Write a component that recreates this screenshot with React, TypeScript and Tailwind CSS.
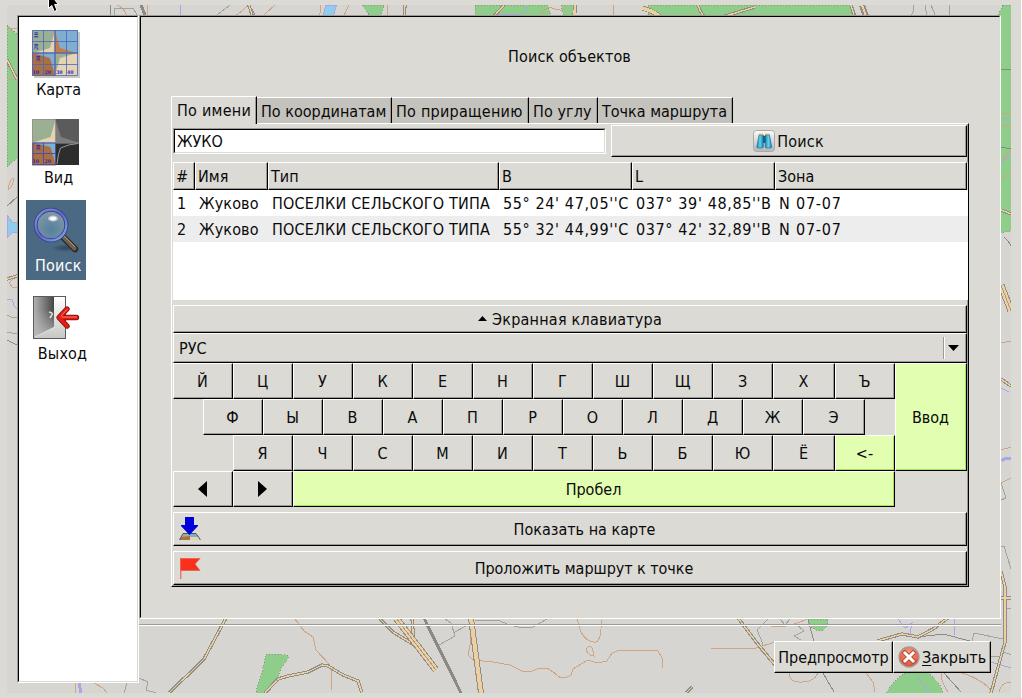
import React from "react";

const bevel =
  "border border-t-white border-l-white border-r-black border-b-black shadow-[inset_-1px_-1px_0_#9c9a92]";
const face = "bg-[#dbdad5]";

function Road({ d, w = 3.4, inner = 1.3 }: { d: string; w?: number; inner?: number }) {
  return (
    <g fill="none">
      <path d={d} stroke="#918e86" strokeWidth={w} />
      <path d={d} stroke="#edcfa2" strokeWidth={inner} />
    </g>
  );
}

function MapBackdrop() {
  return (
    <svg
      className="absolute left-[7px] top-[5px]"
      width="1004"
      height="688"
      viewBox="7 5 1004 688"
      shapeRendering="crispEdges"
    >
      <rect x="7" y="5" width="1004" height="688" fill="#d7d5d1" />
      <g fill="#8ecd8a" stroke="#869b80" strokeWidth="1" strokeDasharray="1 2">
        <path d="M7 25L17 34V159L12 162L7 167Z" />
        <path d="M362 5H384L379 22H374Z" />
        <path d="M475 5H547L553 22H475Z" />
        <path d="M561 5H575V22H565Z" />
        <path d="M648 5H853L857 22H648Z" />
        <path d="M1003 5H1012V231L1000 233V24H993Z" />
        <path d="M266 654L277 654L286 655L289 657L282 667L277 678L266 693H256L257 687L262 672Z" />
        <path d="M808 619H828Q828 631 819 631Q811 629 808 623Z" />
        <path d="M886 693Q895 678 907 672H927Q940 681 943 693Z" />
      </g>
      <g fill="#8ecdec" stroke="#aaa6e6">
        <path d="M326 5H337Q333 12 334 22H321Z" />
        <path d="M7 215L12 222H18V232L12 233L7 238Z" />
      </g>
      <g fill="none" stroke="#cfa584" strokeWidth="1">
        <path d="M295 619L304 631L313 637L316 650L329 664L331 670V690" />
        <path d="M469 619L471 640L468 655L473 660L493 662L510 665L522 671L532 671L540 668L547 668L553 672L561 678L567 677L571 675L573 669L588 660L597 663L607 661L612 653L620 650H650L658 651L662 658L662 668" />
        <path d="M577 619L581 632Q587 643 596 642Q602 639 601 619" />
        <path d="M588 647Q584 650 590 655L594 656Q593 645 588 647Z" />
        <path d="M711 648H756L775 642" />
        <path d="M766 625Q785 630 807 619" />
        <path d="M790 673Q788 683 802 682Q814 682 818 673" />
        <path d="M866 673L873 682L875 692" />
        <path d="M941 673Q941 682 948 692" />
        <path d="M962 673Q984 680 992 692" />
        <path d="M999 692Q1001 682 1011 682" />
        <path d="M75 682V693M94 683L103 688L107 693" />
        <path d="M7 28H17M7 79H17M8 190Q10 178 14 178Q12 188 8 190M17 275L9 283L12 287H17" />
        <path d="M117 5Q124 8 127 16M147 5V15M248 5Q241 13 234 16" />
        <path d="M275 5L256 22M321 5L319 22M349 5L341 22M388 5L387 22M539 22Q540 10 550 7Q565 14 568 5M613 5V22" />
        <path d="M1001 113H1011M1001 125L1011 127M1001 161L1011 150M1001 179L1011 173M1001 343L1011 341M1001 450L1011 447M1001 483L1011 478" />
      </g>
      <g fill="none" stroke="#a5a39e" strokeWidth="1">
        <path d="M445 619L451 623L455 636L439 645M453 633L466 626" />
        <path d="M475 620H497L510 625L518 627H533L547 619" />
        <path d="M139 678L148 682L146 690L156 693M127 683L124 693" />
        <path d="M114 15V8H133L137 15M230 5L217 15M913 5L914 11L906 22M949 5V17H941L934 22M925 5Q926 15 930 22M931 5L938 22" />
        <path d="M768 619L757 630L763 644L760 650L772 660M780 619L785 625L790 619M796 624L804 631L794 636L801 640" />
        <path d="M972 641L974 633L1003 639M1005 608H1011M1001 656H991M1004 652L1011 655" />
        <path d="M1004 546L1011 569M1001 546H1004M1001 483L1006 498L1001 500" />
        <path d="M7 315L11 317H17M7 332L17 334" />
      </g>
      <g fill="none" stroke="#8b8984">
        <path d="M424 618L461 693" strokeWidth="3" />
        <path d="M141 5L145 15" strokeWidth="3" />
        <path d="M110 5L111 15M808 619L810 627L814 641M823 673L834 692" />
        <path d="M918 637L943 634L970 641M944 673L961 692M1001 147L1011 149M1004 237Q1009 241 1011 246M7 206L17 197M7 340L17 345M1001 69L1011 70" />
      </g>
      <g fill="none" stroke="#aaa6e6">
        <path d="M180 5V15M497 15L520 14L526 11V5M954 619V635M898 619L905 628L912 623L910 634M918 677L929 692M991 662L1011 668" />
        <path d="M1001 118H1011M1001 162L1011 155M1001 388L1009 392M7 300Q13 297 14 306L17 309" />
        <path d="M1001 461Q1004 458 1011 458" strokeWidth="3" />
        <path d="M79 683L81 693" strokeWidth="3" />
      </g>
      <Road d="M7 60L17 79" />
      <Road d="M7 279L17 276" />
      <Road d="M248 5L254 15" />
      <Road d="M249 5L254 22M405 5L404 22" />
      <Road d="M504 5L489 22" />
      <Road d="M575 5L574 22" w={4} inner={2.4} />
      <Road d="M642 8Q660 13 664 22" w={5} inner={3.6} />
      <Road d="M698 5Q702 17 709 21L755 7" />
      <Road d="M851 5L856 22" w={3.4} />
      <Road d="M862 5L868 22" w={6} inner={2} />
      <Road d="M1001 210L1011 214" />
      <Road d="M1001 285L1011 311" w={7} inner={5} />
      <path d="M1001 285L1011 311" stroke="#a79b87" fill="none" />
      <Road d="M1001 379L1011 386" />
      <Road d="M226 618L204 659L190 673L180 682L169 693" />
      <Road d="M265 693L278 679L288 676L308 672L322 665L328 666L343 675L358 681L362 693" />
      <Road d="M380 619L393 632L416 646L421 652" />
      <Road d="M412 618L414 643" />
      <Road d="M396 618L436 670" w={7} inner={5} />
      <path d="M396 618L436 670" stroke="#a79b87" fill="none" />
      <Road d="M471 618L481 693" w={6} inner={4} />
      <Road d="M686 693L692 687" />
      <Road d="M738 618L757 643L775 665" />
      <Road d="M877 641L902 634L918 637L933 629L948 618" />
      <Road d="M1001 571L1005 587V642L991 693M1001 598H1011" />
    </svg>
  );
}

function Cursor() {
  return (
    <svg className="absolute left-[47px] top-0" width="14" height="13" viewBox="0 0 14 13">
      <path d="M1.5 -8V8.5L4.8 5.5L7.2 11.5L10 10.3L7.6 4.6H11.5Z" fill="#000" stroke="#fff" strokeWidth="1" />
    </svg>
  );
}

function GridLabels({ view }: { view?: boolean }) {
  return (
    <g
      fill="#2a2ab0"
      fontFamily="DejaVu Serif, serif"
      fontSize="5.2"
      fontWeight="bold"
    >
      <text x="0.5" y="43.8">10</text>
      <text x="12.5" y="43.8">20</text>
      {!view && <text x="24" y="43.8">30</text>}
      {!view && <text x="35" y="43.8">40</text>}
      {!view && <text transform="translate(6 8.5) rotate(-90)" x="0" y="0">10</text>}
      {!view && <text transform="translate(6 20) rotate(-90)" x="0" y="0">20</text>}
      <text transform="translate(7.5 32) rotate(-90)" x="0" y="0">30</text>
    </g>
  );
}

function MapIcon() {
  return (
    <svg width="48" height="48" viewBox="0 0 48 48">
      <rect x="2" y="2" width="46" height="46" fill="#c8c8c8" />
      <rect width="23" height="23" fill="#9bb092" />
      <rect x="23" width="23" height="23" fill="#7fafd0" />
      <rect y="23" width="23" height="23" fill="#aa7043" />
      <rect x="23" y="23" width="23" height="23" fill="#e6d3b3" />
      <path d="M23 1L18 18L1 23H23Z" fill="#e6d3b3" />
      <path d="M23 1L28 18L45 23H23Z" fill="#c87b45" />
      <path d="M23 45L18 28L1 23H23Z" fill="#7fafd0" />
      <path d="M23 45L28 28L45 23H23Z" fill="#9bb092" />
      <path d="M.5 .5H45.5V45.5H.5ZM11.5 0V46M34.5 0V46M0 11.5H46M0 34.5H46" fill="none" stroke="#4867bd" strokeOpacity=".8" />
      <path d="M23 0V46M0 23H46" stroke="#5967ad" strokeWidth="1.5" />
      <GridLabels />
    </svg>
  );
}

function ViewIcon() {
  return (
    <svg width="47" height="47" viewBox="0 0 47 47">
      <rect width="24" height="24" fill="#9bb092" />
      <rect x="23.5" width="23.5" height="24" fill="#5b5b5b" />
      <rect y="23.5" width="24" height="23" fill="#aa7043" />
      <rect x="24" y="24" width="23" height="22" fill="#2d2d2d" />
      <path d="M23.5 1L18.5 18L1 23.5H23.5Z" fill="#e6d3b3" />
      <path d="M23.5 1L29 18L46 23.5H23.5Z" fill="#7d7d7d" />
      <path d="M23.5 45L18.5 28L1 23.5H23.5Z" fill="#7fafd0" />
      <path d="M25 45Q26 35 28.5 29Q37 25 46 24.5" fill="none" stroke="#999" />
      <path d="M1 24V45.5H23M11.5 24V46M1 34.5H23M1 24H23.5V46" fill="none" stroke="#4a4fa8" />
      <path d="M.5 .5V24M0 .5H23M24 24H47" fill="none" stroke="#939393" />
      <GridLabels view />
    </svg>
  );
}

function MagnifierIcon() {
  return (
    <svg width="48" height="48" viewBox="0 0 48 48">
      <defs>
        <radialGradient id="lens" cx=".5" cy=".65" r=".6">
          <stop offset="0" stopColor="#54809c" />
          <stop offset="1" stopColor="#8497a8" />
        </radialGradient>
        <radialGradient id="shade">
          <stop offset="0" stopColor="#1e3349" stopOpacity=".65" />
          <stop offset="1" stopColor="#1e3349" stopOpacity="0" />
        </radialGradient>
        <linearGradient id="rim" x1="0" y1="0" x2="1" y2="1">
          <stop offset="0" stopColor="#8a91dc" />
          <stop offset=".5" stopColor="#6a60cc" />
          <stop offset="1" stopColor="#86aee9" />
        </linearGradient>
      </defs>
      <ellipse cx="33" cy="42" rx="14" ry="4" fill="url(#shade)" />
      <path d="M31 31L43 43" stroke="#2c2723" strokeWidth="6.6" strokeLinecap="round" />
      <path d="M31.5 31L42.5 42.5" stroke="#6f5f4f" strokeWidth="4.2" strokeLinecap="round" />
      <path d="M32 30L43 41" stroke="#a59785" strokeWidth="1" />
      <circle cx="19" cy="19" r="15.3" fill="url(#lens)" stroke="#234784" strokeWidth="4" />
      <circle cx="19" cy="19" r="15.3" fill="none" stroke="url(#rim)" strokeWidth="2.3" />
      <ellipse cx="21" cy="12.5" rx="5" ry="3" fill="#fff" fillOpacity=".55" />
      <ellipse cx="21" cy="12.5" rx="3" ry="1.8" fill="#fff" />
    </svg>
  );
}

function ExitIcon() {
  return (
    <svg width="48" height="44" viewBox="0 0 48 44">
      <defs>
        <linearGradient id="door" x1="0" x2="1">
          <stop offset="0" stopColor="#b0b0b0" />
          <stop offset=".5" stopColor="#7d7d7d" />
          <stop offset="1" stopColor="#454545" />
        </linearGradient>
        <linearGradient id="sheen" x1="0" y1="0" x2="0" y2="1">
          <stop offset=".3" stopColor="#bbb" stopOpacity="0" />
          <stop offset="1" stopColor="#bbb" stopOpacity=".9" />
        </linearGradient>
        <linearGradient id="frame" x1="0" y1="0" x2="0" y2="1">
          <stop offset="0" stopColor="#fff" />
          <stop offset="1" stopColor="#c5c8c2" />
        </linearGradient>
      </defs>
      <rect x=".5" y=".5" width="32" height="42" fill="url(#frame)" stroke="#5b5b5b" />
      <path d="M1 1H21V31L3 41L1 42Z" fill="url(#door)" />
      <path d="M1 1H21V31L3 41L1 42Z" fill="url(#sheen)" />
      <path d="M2 41L22 31" stroke="#e4e4e4" />
      <path d="M16 16Q21 17 18.5 19.5L17 22" fill="none" stroke="#ddd" strokeWidth="1.6" />
      <path d="M43.500 21.5H27M34 13L26 21.5L34 30" fill="none" stroke="#8b1212" strokeWidth="5.4" strokeLinecap="round" strokeLinejoin="round" />
      <path d="M43.500 21.5H27M34 13L26 21.5L34 30" fill="none" stroke="#e51c16" strokeWidth="3.6" strokeLinecap="round" strokeLinejoin="round" />
      <path d="M43.500 21H29M34 13.5L28 20" fill="none" stroke="#ff7a62" strokeWidth="1" strokeLinecap="round" />
    </svg>
  );
}

function BinocularsIcon() {
  return (
    <svg className="mb-[2px]" width="22" height="22" viewBox="0 0 22 22">
      <defs>
        <linearGradient id="tile" x1="0" y1="0" x2="0" y2="1">
          <stop offset="0" stopColor="#fbfbfb" />
          <stop offset="1" stopColor="#b5b5b5" />
        </linearGradient>
        <linearGradient id="tube" x1="0" x2="1">
          <stop offset="0" stopColor="#1688b5" />
          <stop offset=".5" stopColor="#62d0f2" />
          <stop offset="1" stopColor="#1585ae" />
        </linearGradient>
      </defs>
      <rect x=".5" y=".5" width="21" height="21" rx="3" fill="url(#tile)" stroke="#a9a9a9" />
      <rect x="9.500" y="6" width="3.500" height="7" fill="#1a627e" />
      <path d="M6 5H10.300V17L9.500 18H4.500L3.800 17Z" fill="url(#tube)" stroke="#17617d" strokeWidth=".6" />
      <path d="M12.200 5H16.500L18.700 17L18 18H13L12.200 17Z" fill="url(#tube)" stroke="#17617d" strokeWidth=".6" />
      <path d="M6 4.500H10M12.500 4.500H16.500" stroke="#c9ad5a" strokeWidth="1.600" />
    </svg>
  );
}

function ShowIcon() {
  return (
    <svg width="22" height="24" viewBox="0 0 22 24">
      <path d="M4 17H17L21.500 23H.5Z" fill="#9bb092" />
      <path d="M11 17H17L19.500 20H11Z" fill="#7fafd0" />
      <path d="M2.500 20L11 19V23H.5Z" fill="#aa7043" />
      <path d="M11 23V20H19.500L21.500 23Z" fill="#e6d3b3" />
      <path d="M4 16.500H17L21.500 23M4 16.500L.5 23" fill="none" stroke="#4f5652" />
      <path d="M6 0H15V8H19V9L10.500 18L2 9V8H6Z" fill="#0000dc" />
    </svg>
  );
}

function FlagIcon() {
  return (
    <svg width="21" height="21" viewBox="0 0 21 21">
      <rect width="1.500" height="21" fill="#f07a6d" />
      <path d="M.5 .5H20L15 6L20 12.500H.5Z" fill="#f8301c" stroke="#e9624f" strokeWidth=".8" />
    </svg>
  );
}

function CloseIcon() {
  return (
    <svg className="mb-[2px]" width="22" height="22" viewBox="0 0 22 22">
      <defs>
        <radialGradient id="red" cx=".5" cy=".3" r=".7">
          <stop offset="0" stopColor="#f59a82" />
          <stop offset="1" stopColor="#dc4d37" />
        </radialGradient>
      </defs>
      <circle cx="11" cy="11" r="10" fill="url(#red)" stroke="#a49a97" strokeWidth="1.300" />
      <path d="M7 7L15 15M15 7L7 15" stroke="#b5442f" strokeWidth="4.600" strokeLinecap="square" />
      <path d="M7 7L15 15M15 7L7 15" stroke="#fff" strokeWidth="3" strokeLinecap="square" />
    </svg>
  );
}

function Key({ children, className = "w-[60px]", green }: { children: React.ReactNode; className?: string; green?: boolean }) {
  return (
    <button
      className={`flex shrink-0 items-center justify-center border border-t-white border-l-white border-r-black border-b-black pt-[2px] pr-px ${
        green
          ? "bg-[#e2ffb1] shadow-[inset_-1px_-1px_0_#a4e05a]"
          : "bg-[#dbdad5] shadow-[inset_-1px_-1px_0_#9c9a92]"
      } ${className}`}
    >
      {children}
    </button>
  );
}

const columns = [
  { name: "#", w: "w-[22px]", tracking: "" },
  { name: "Имя", w: "w-[73px]", tracking: "tracking-[0.15px]" },
  { name: "Тип", w: "w-[231px]", tracking: "tracking-[0.18px]" },
  { name: "B", w: "w-[133px]", tracking: "tracking-[0.62px]" },
  { name: "L", w: "w-[143px]", tracking: "tracking-[0.62px]" },
  { name: "Зона", w: "w-[192px]", tracking: "tracking-[0.8px]" },
];

const results = [
  ["1", "Жуково", "ПОСЕЛКИ СЕЛЬСКОГО ТИПА", "55° 24' 47,05''С", "037° 39' 48,85''В", "N 07-07"],
  ["2", "Жуково", "ПОСЕЛКИ СЕЛЬСКОГО ТИПА", "55° 32' 44,99''С", "037° 42' 32,89''В", "N 07-07"],
];

const tabs = [
  { name: "По координатам", w: "w-[135px]", tracking: "" },
  { name: "По приращению", w: "w-[137px]", tracking: "tracking-[0.24px]" },
  { name: "По углу", w: "w-[69px]", tracking: "tracking-[0.1px]" },
  { name: "Точка маршрута", w: "w-[135px]", tracking: "" },
];

function Sidebar() {
  return (
    <nav className="flex h-[668px] w-[122px] shrink-0 border border-t-[#9c9a92] border-l-[#9c9a92] border-r-white border-b-white">
      <div className="flex w-full flex-col border border-t-black border-l-black border-r-[#dbdad5] border-b-[#dbdad5] bg-white">
        <div className="flex h-[89px] w-[78px] flex-col items-center pt-[13px] pl-[1px]">
          <div className="pr-[5px]"><MapIcon /></div>
          <span className="mt-[2px] tracking-[-0.15px]">Карта</span>
        </div>
        <div className="flex h-[94px] w-[79px] flex-col items-center pt-[13px]">
          <div className="pr-[6px]"><ViewIcon /></div>
          <span className="mt-[2px]">Вид</span>
        </div>
        <div className="ml-[7px] flex h-[80px] w-[60px] flex-col bg-[#4b6983] pt-[6px] pl-[5px] text-white">
          <div className="pl-px"><MagnifierIcon /></div>
          <span className="mt-[2px] ml-[4px] tracking-[0.2px]">Поиск</span>
        </div>
        <div className="flex w-[87px] flex-col items-center pt-[16px]">
          <div className="pr-[11px]"><ExitIcon /></div>
          <span className="mt-[4px] tracking-[0.2px]">Выход</span>
        </div>
      </div>
    </nav>
  );
}

function Keyboard() {
  return (
    <div className="flex h-[144px]">
      <div className="flex w-[722px] flex-col">
        <div className="flex h-[36px]">
          {"ЙЦУКЕНГШЩЗ".split("").map((k) => <Key key={k}>{k}</Key>)}
          <Key className="w-[62px]">Х</Key>
          <Key>Ъ</Key>
        </div>
        <div className="flex h-[36px] pl-[30px]">
          {"ФЫВАПРОЛДЖ".split("").map((k) => <Key key={k}>{k}</Key>)}
          <Key className="w-[62px]">Э</Key>
        </div>
        <div className="flex h-[36px] pl-[60px]">
          {"ЯЧСМИТЬБЮ".split("").map((k) => <Key key={k}>{k}</Key>)}
          <Key className="w-[62px]">Ё</Key>
          <Key green>&lt;-</Key>
        </div>
        <div className="flex h-[36px]">
          <Key>
            <svg className="mr-px mb-[3px]" width="9" height="16" viewBox="0 0 9 16"><path d="M9 0V16L0 8Z" /></svg>
          </Key>
          <Key>
            <svg className="mr-px mb-[3px]" width="9" height="16" viewBox="0 0 9 16"><path d="M0 0V16L9 8Z" /></svg>
          </Key>
          <Key green className="w-[602px]">Пробел</Key>
        </div>
      </div>
      <Key green className="h-[108px] w-[72px]">Ввод</Key>
    </div>
  );
}

function SearchPanel() {
  return (
    <section className={`flex h-[604px] w-[862px] border border-t-[#9c9a92] border-l-[#9c9a92] border-r-white border-b-white ${face}`}>
      <div className="flex w-full flex-col border border-t-black border-l-black border-r-[#dbdad5] border-b-[#dbdad5] pl-[30px]">
        <h1 className="flex h-[79px] w-[797px] items-center justify-center tracking-[0.12px]">Поиск объектов</h1>
        <div className="relative z-10 flex h-[28px] items-end">
          <div className="flex h-[28px] w-[86px] items-center border border-t-white border-l-white border-r-black border-b-0 bg-[#dbdad5] pt-[1px] pl-[5px] tracking-[0.25px] whitespace-nowrap shadow-[inset_-1px_0_0_#9c9a92]">
            По имени
          </div>
          {tabs.map((t) => (
            <div
              key={t.name}
              className={`mb-px flex h-[26px] items-center border border-t-white border-l-0 border-r-black border-b-0 bg-[#c4c2bc] pl-[4px] pt-[3px] whitespace-nowrap shadow-[inset_-1px_0_0_#9c9a92] ${t.w} ${t.tracking}`}
            >
              {t.name}
            </div>
          ))}
        </div>
        <div className="-mt-px flex h-[464px] w-[798px] flex-col border border-t-white border-l-white border-r-black border-b-black pl-[1px] shadow-[inset_-1px_-1px_0_#9c9a92]">
          <div className="flex h-[38px] w-[794px] justify-between pt-px">
            <div className="mt-[3px] flex h-[26px] w-[433px] border border-t-[#9c9a92] border-l-[#9c9a92] border-r-white border-b-white">
              <div className="flex w-full items-center border border-t-black border-l-black border-r-[#dbdad5] border-b-[#dbdad5] bg-white pt-[2px] pl-[2px]">
                ЖУКО
              </div>
            </div>
            <button className={`flex h-[32px] w-[356px] items-center justify-center gap-[2px] pt-[2px] pr-px ${face} ${bevel}`}>
              <BinocularsIcon />
              <span className="tracking-[0.2px]">Поиск</span>
            </button>
          </div>
          <div className="h-[138px] w-[795px] bg-white">
            <div className="flex h-[28px] bg-[#dbdad5]">
              {columns.map((c) => (
                <div key={c.name} className={`flex items-center pt-[2px] pl-[2px] ${face} ${bevel} ${c.w}`}>
                  {c.name}
                </div>
              ))}
            </div>
            {results.map((r, ri) => (
              <div key={r[0]} className={`flex h-[26px] items-center pt-[2px] whitespace-nowrap ${ri ? "bg-[#ededed]" : "bg-white"}`}>
                {r.map((v, i) => (
                  <div key={i} className={`shrink-0 pl-[4px] ${columns[i].w} ${columns[i].tracking}`}>{v}</div>
                ))}
              </div>
            ))}
          </div>
          <div className="flex w-[794px] flex-col pt-[5px]">
            <button className={`flex h-[28px] items-center justify-center gap-[5px] pt-[2px] ${face} ${bevel}`}>
              <svg className="mb-[4px]" width="9" height="5" viewBox="0 0 9 5"><path d="M4.500 0L9 5H0Z" /></svg>
              <span className="tracking-[0.22px]">Экранная клавиатура</span>
            </button>
            <div className={`flex h-[30px] items-center justify-between pl-[5px] pr-[7px] ${face} ${bevel}`}>
              <span className="pt-[2px]">РУС</span>
              <div className="flex h-[22px] items-center border-l border-[#9c9a92] pl-[4px] shadow-[inset_1px_0_0_#fff]">
                <svg width="11" height="6" viewBox="0 0 11 6"><path d="M0 0H11L5.500 6Z" /></svg>
              </div>
            </div>
            <Keyboard />
            <button className={`mt-[5px] flex h-[34px] items-center pl-[5px] ${face} ${bevel}`}>
              <ShowIcon />
              <span className="flex-1 pt-[2px] pl-[2px] text-center">Показать на карте</span>
            </button>
            <button className={`mt-[5px] flex h-[34px] items-center pl-[6px] ${face} ${bevel}`}>
              <FlagIcon />
              <span className="flex-1 pt-[2px] pl-px text-center tracking-[-0.04px]">Проложить маршрут к точке</span>
            </button>
          </div>
        </div>
      </div>
    </section>
  );
}

export default function App() {
  return (
    <div className="relative h-[698px] w-[1022px] overflow-hidden border-r border-white bg-[#dbdad5] font-['DejaVu_Sans_Condensed','DejaVu_Sans',sans-serif] text-[16px] leading-[20px] text-[#0a0a0a] [font-stretch:condensed]">
      <MapBackdrop />
      <div className="relative flex pt-[15px] pl-[17px]">
        <Sidebar />
        <main className="flex w-[862px] flex-col">
          <SearchPanel />
          <div className="mt-[5px] h-[2px] border-t border-b border-t-[#9c9a92] border-b-white" />
          <div className="mt-[15px] flex h-[32px] justify-end pr-[10px]">
            <button className={`flex w-[119px] items-center justify-center pt-[2px] tracking-[-0.08px] whitespace-nowrap ${face} ${bevel}`}>
              Предпросмотр
            </button>
            <button className={`flex w-[98px] items-center gap-[2px] pt-[2px] pl-[4px] whitespace-nowrap ${face} ${bevel}`}>
              <CloseIcon />
              <span><span className="underline underline-offset-2">З</span>акрыть</span>
            </button>
          </div>
        </main>
      </div>
      <Cursor />
    </div>
  );
}
